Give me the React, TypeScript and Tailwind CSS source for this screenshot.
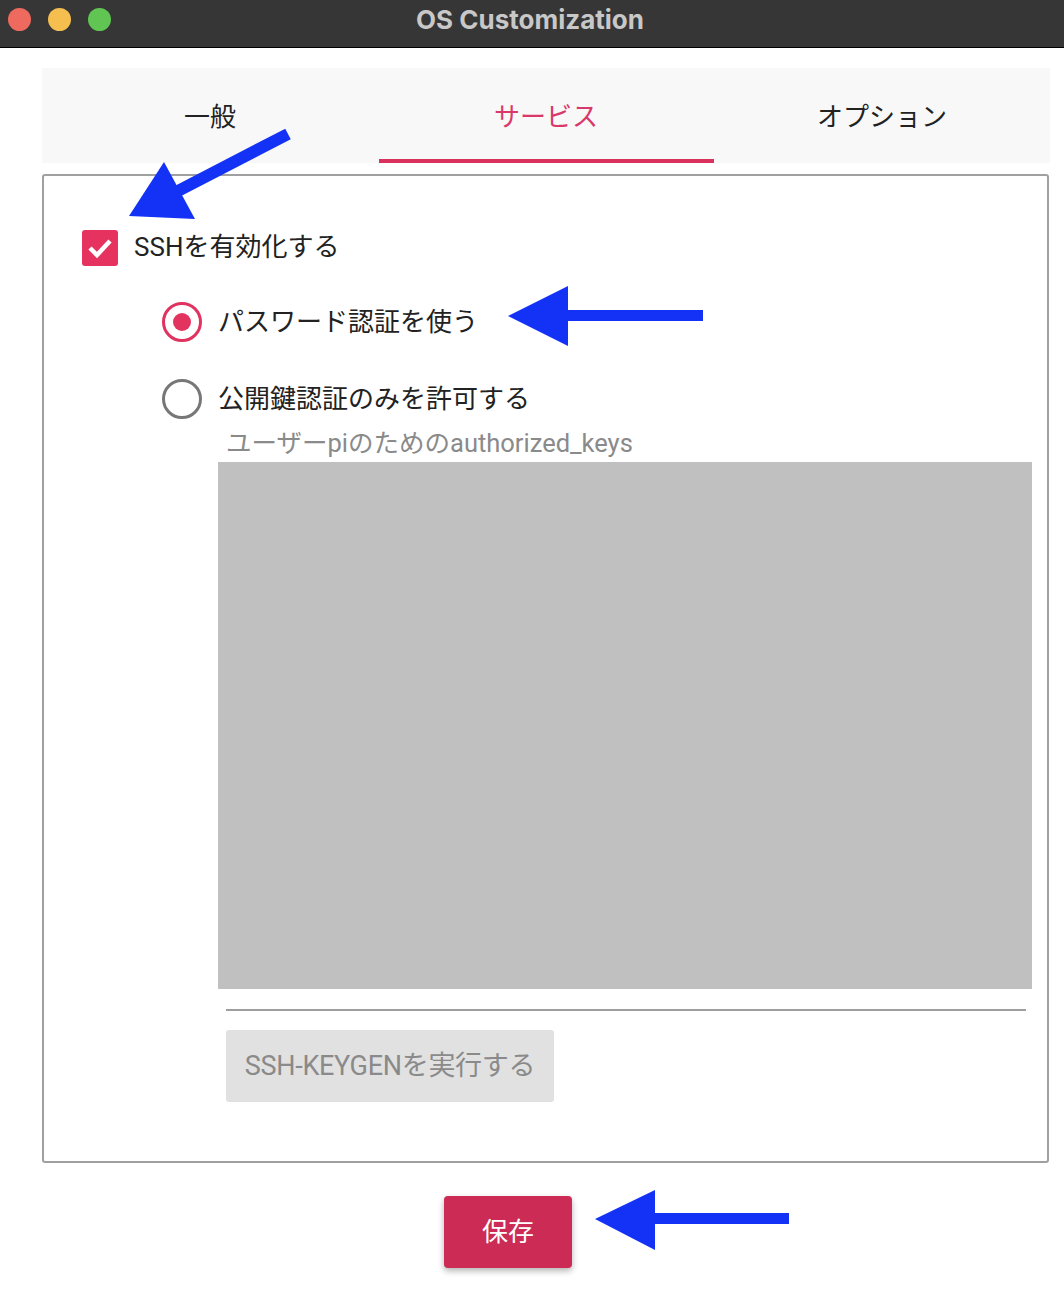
import React from "react";

const jp = "font-['Roboto','Noto_Sans_CJK_JP',sans-serif]";

function Tab({ label, active }: { label: string; active?: boolean }) {
  return (
    <div className="relative flex items-center justify-center pt-[3px]">
      <span className={active ? "text-[#d8386a]" : "text-[#222]"}>{label}</span>
      {active && <div className="absolute bottom-0 left-[1px] right-0 h-[4px] bg-[#d9325f]" />}
    </div>
  );
}

function Radio({ checked }: { checked?: boolean }) {
  return checked ? (
    <div className="w-[40px] h-[40px] rounded-full border-[3px] border-[#e0335f] flex items-center justify-center">
      <div className="w-[18px] h-[18px] rounded-full bg-[#e3335f]" />
    </div>
  ) : (
    <div className="w-[40px] h-[40px] rounded-full border-[3px] border-[#777]" />
  );
}

function Arrows() {
  return (
    <svg className="absolute inset-0 pointer-events-none" width="1064" height="1291">
      {/* diagonal arrow to checkbox */}
      <line x1="288" y1="134" x2="176" y2="192" stroke="#1432f5" strokeWidth="12" />
      <polygon points="129,216 164,162 195,219" fill="#1432f5" />
      {/* arrow to password radio */}
      <rect x="565" y="310" width="138" height="11" fill="#1432f5" />
      <polygon points="508,316 568,286 568,346" fill="#1432f5" />
      {/* arrow to save */}
      <rect x="652" y="1213" width="137" height="11" fill="#1432f5" />
      <polygon points="595,1219 655,1190 655,1250" fill="#1432f5" />
    </svg>
  );
}

export default function App() {
  return (
    <div className={`relative w-[1064px] h-[1291px] bg-white ${jp}`}>
      {/* title bar */}
      <div className="h-[48px] bg-[#363636] border-b border-black grid grid-cols-[1fr_auto_1fr] items-center">
        <div className="flex items-center gap-[17px] pl-[8px] -mt-[8px]">
          <div className="w-[23px] h-[23px] rounded-full bg-[#ee6a5e]" />
          <div className="w-[23px] h-[23px] rounded-full bg-[#f5bf4f]" />
          <div className="w-[23px] h-[23px] rounded-full bg-[#61c554]" />
        </div>
        <div className="font-['Inter','Noto_Sans_CJK_JP',sans-serif] font-bold text-[26px] text-[#c8c8c8] -mt-[9px] -ml-[4px]">
          OS Customization
        </div>
        <div />
      </div>

      <div className="pl-[42px] pr-[14px] pt-[20px]">
        {/* tabs */}
        <div className="h-[95px] bg-[#f8f8f8] grid grid-cols-3 text-[26px]">
          <Tab label="一般" />
          <Tab label="サービス" active />
          <Tab label="オプション" />
        </div>

        {/* panel */}
        <div className="mt-[11px] w-[1007px] h-[989px] border-2 border-[#a0a0a0] rounded-[3px]">
          <div className="mt-[52px] pl-[38px] flex items-center gap-[16px]">
            <div className="w-[36px] h-[36px] rounded-[3px] bg-[#e6325f] flex items-center justify-center">
              <svg width="26" height="22" viewBox="0 0 26 22">
                <path d="M3 11 L10 18 L23 4" fill="none" stroke="white" strokeWidth="4.5" />
              </svg>
            </div>
            <span className="text-[26px] text-[#222]">SSHを有効化する</span>
          </div>

          <div className="mt-[35px] pl-[118px] flex items-center gap-[16px]">
            <Radio checked />
            <span className="text-[26px] text-[#222]">パスワード認証を使う</span>
          </div>

          <div className="mt-[37px] pl-[118px] flex items-center gap-[16px]">
            <Radio />
            <span className="text-[26px] text-[#222]">公開鍵認証のみを許可する</span>
          </div>

          <div className="mt-[9px] pl-[182px] text-[25.5px] leading-[30px] text-[#8a8a8a]">
            ユーザーpiのためのauthorized_keys
          </div>

          <div className="mt-[4px] ml-[174px] mr-[15px] h-[527px] bg-[#c0c0c0]" />

          <div className="mt-[20px] ml-[182px] mr-[21px] h-[2px] bg-[#9e9e9e]" />

          <div className="mt-[19px] ml-[182px]">
            <div className="w-[328px] h-[72px] rounded-[3px] bg-[#e1e1e1] flex items-center justify-center text-[27px] text-[#8a8a8a] tracking-[-0.3px]">
              SSH-KEYGENを実行する
            </div>
          </div>
        </div>

        <div className="mt-[33px] pl-[402px]">
          <div className="w-[128px] h-[72px] rounded-[4px] bg-[#cc2b55] shadow-[0_3px_6px_rgba(0,0,0,0.3)] flex items-center justify-center text-[26px] text-white">
            保存
          </div>
        </div>
      </div>

      <Arrows />
    </div>
  );
}
